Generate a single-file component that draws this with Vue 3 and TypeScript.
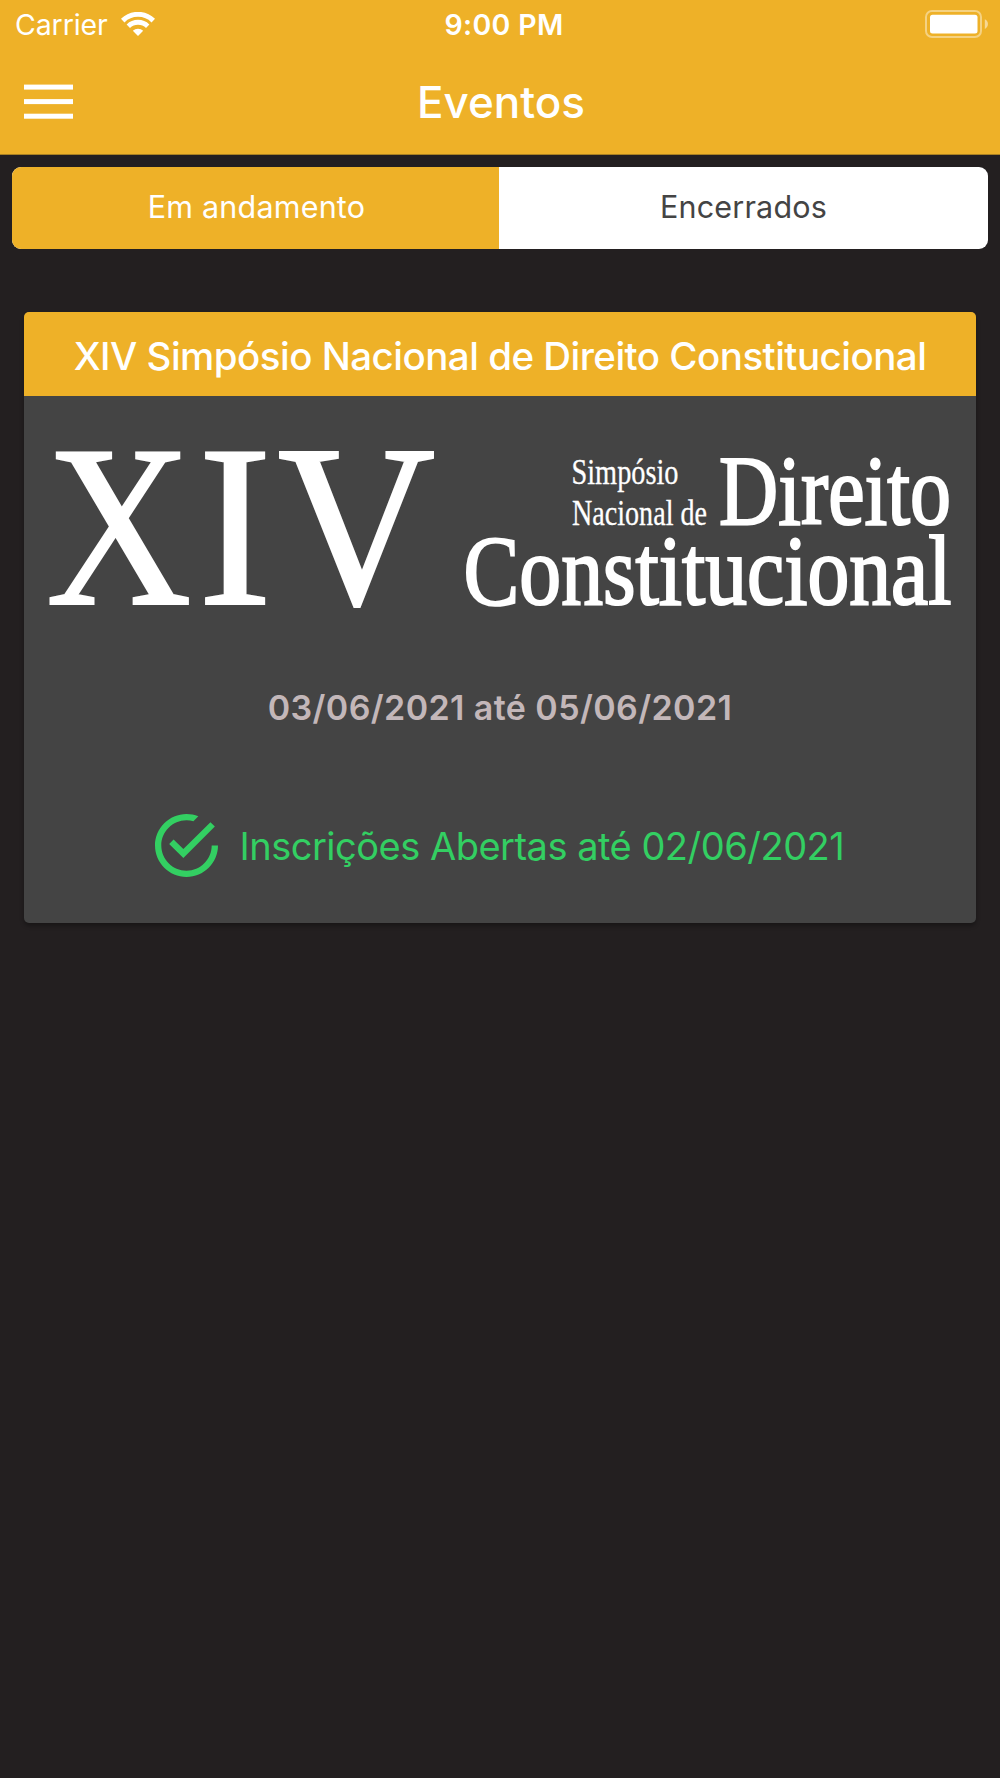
<script setup lang="ts">
import { ref } from 'vue'

interface Tab {
  id: string
  label: string
}

const tabs: Tab[] = [
  { id: 'ongoing', label: 'Em andamento' },
  { id: 'closed', label: 'Encerrados' },
]
const active = ref('ongoing')

const event = {
  title: 'XIV Simpósio Nacional de Direito Constitucional',
  period: '03/06/2021 até 05/06/2021',
  status: 'Inscrições Abertas até 02/06/2021',
}
</script>

<template>
  <div class="screen">
    <header class="top">
      <div class="status-bar">
        <div class="network">
          <span class="carrier">Carrier</span>
          <svg class="wifi" width="34" height="24" viewBox="0 0 34 24" fill="none" stroke="#fff">
            <path d="M1.7 8.6a21.8 21.8 0 0 1 30.6 0" stroke-width="5" />
            <path d="M7.3 14.2a13.9 13.9 0 0 1 19.4 0" stroke-width="4.8" />
            <path d="M17 24l-5.2-5.2a7.6 7.6 0 0 1 10.4 0z" fill="#fff" stroke="none" />
          </svg>
        </div>
        <span class="clock">9:00 PM</span>
        <svg class="battery" width="64" height="28" viewBox="0 0 64 28">
          <rect x="1" y="1" width="55" height="26" rx="6" fill="none" stroke="#fff" stroke-opacity=".42" stroke-width="2" />
          <rect x="5" y="4.8" width="47.5" height="18.6" rx="2.5" fill="#fff" />
          <path d="M59.8 9.3c4.2 1.8 4.2 7.8 0 9.6z" fill="#fff" fill-opacity=".5" />
        </svg>
      </div>
      <nav class="nav">
        <button class="menu" aria-label="Menu">
          <svg width="49" height="36" viewBox="0 0 49 36" fill="#fff">
            <rect y="0.6" width="49" height="5" />
            <rect y="15.1" width="49" height="5" />
            <rect y="29.7" width="49" height="5" />
          </svg>
        </button>
        <h1>Eventos</h1>
      </nav>
    </header>

    <main>
      <div class="segment">
        <button
          v-for="tab in tabs"
          :key="tab.id"
          :class="['tab', tab.id, { active: active === tab.id }]"
          @click="active = tab.id"
        >
          <span>{{ tab.label }}</span>
        </button>
      </div>

      <article class="card">
        <h2><span>{{ event.title }}</span></h2>
        <svg class="logo" width="952" height="244" viewBox="24 396 952 244" fill="#fff">
          <g font-size="230" stroke="#fff" stroke-width="2">
            <text x="46" y="604" textLength="145.6" lengthAdjust="spacingAndGlyphs">X</text>
            <text x="198" y="604" textLength="74" lengthAdjust="spacingAndGlyphs">I</text>
            <text x="277.5" y="604" textLength="158" lengthAdjust="spacingAndGlyphs">V</text>
          </g>
          <g font-size="36" stroke="#fff" stroke-width="0.3">
            <text x="571.5" y="483.6" textLength="107" lengthAdjust="spacingAndGlyphs">Simpósio</text>
            <text x="572" y="525" textLength="135" lengthAdjust="spacingAndGlyphs">Nacional de</text>
          </g>
          <g font-size="99" stroke="#fff" stroke-width="2.2">
            <text x="719" y="524" textLength="232" lengthAdjust="spacingAndGlyphs">Direito</text>
            <text x="463.5" y="604" textLength="488" lengthAdjust="spacingAndGlyphs">Constitucional</text>
          </g>
        </svg>
        <p class="period"><span>{{ event.period }}</span></p>
        <p class="status">
          <svg width="63" height="63" viewBox="48 48 416 416" fill="#33cf62">
            <path d="M170.718 216.482L141.6 245.6l93.6 93.6 208-208-29.118-29.118L235.2 279.918z" />
            <path d="M422.4 256c0 91.518-74.883 166.4-166.4 166.4S89.6 347.518 89.6 256 164.482 89.6 256 89.6c15.6 0 31.2 2.082 45.764 6.241L334 62.4C310.082 53.041 283.036 48 256 48 141.6 48 48 141.6 48 256s93.6 208 208 208 208-93.6 208-208z" />
          </svg>
          <span>{{ event.status }}</span>
        </p>
      </article>
    </main>
  </div>
</template>

<style>
body {
  background: #231f20;
}
</style>

<style scoped>
.screen {
  box-sizing: border-box;
  width: 1000px;
  height: 1778px;
  overflow: hidden;
  background: #231f20;
  color: #fff;
  font-family: Inter, 'Liberation Sans', sans-serif;
  white-space: nowrap;
}
button {
  padding: 0;
  border: 0;
  background: none;
  color: inherit;
  font: inherit;
}
h1,
h2,
p {
  margin: 0;
}
.top {
  height: 154px;
  background: #eeb128;
  border-bottom: 1px solid #a98022;
}
.status-bar {
  display: grid;
  grid-template-columns: 1fr auto 1fr;
  align-items: start;
  height: 50px;
  padding: 0 11px 0 15px;
  box-sizing: border-box;
}
.network {
  display: flex;
  gap: 14px;
}
.carrier {
  width: 92px;
  font-size: 28.5px;
  letter-spacing: -0.1px;
  line-height: 50px;
}
.wifi {
  margin-top: 12px;
}
.clock {
  padding-left: 4px;
  font-size: 28.5px;
  font-weight: 600;
  letter-spacing: 0.35px;
  line-height: 50px;
}
.battery {
  justify-self: end;
  margin-top: 10px;
}
.nav {
  display: grid;
  grid-template-columns: 49px 1fr 49px;
  align-items: start;
  height: 104px;
  padding: 0 24px;
}
.menu {
  height: 36px;
  margin-top: 34px;
}
.menu svg {
  display: block;
}
h1 {
  padding-left: 2px;
  font-size: 44px;
  font-weight: 500;
  line-height: 105px;
  text-align: center;
}
.segment {
  display: flex;
  height: 82px;
  margin: 12px 12px 0;
  border-radius: 9px;
  overflow: hidden;
  background: #fff;
}
.tab {
  flex: 1;
  color: #444;
  font-size: 30.5px;
  letter-spacing: 0.2px;
  line-height: 79px;
}
.tab span {
  display: block;
  height: 82px;
}
.tab.ongoing {
  flex: 0 0 487px;
}
.tab.ongoing span {
  padding-left: 2px;
}
.tab.active {
  background: #eeb128;
  color: #fff;
}
.card {
  display: flex;
  flex-direction: column;
  height: 611px;
  margin: 63px 24px 0;
  border-radius: 5px;
  overflow: hidden;
  background: #444;
  box-shadow: 0 3px 4px rgba(0, 0, 0, 0.3);
}
h2 {
  height: 84px;
  background: #eeb128;
  font-size: 38.5px;
  font-weight: 500;
  letter-spacing: -0.52px;
  line-height: 88px;
  text-align: center;
}
.logo {
  flex: none;
  overflow: visible;
  font-family: 'Liberation Serif', serif;
}
.period {
  margin-top: 38px;
  color: #c3b7b9;
  font-size: 34px;
  font-weight: 600;
  letter-spacing: 0.4px;
  line-height: 60px;
  text-align: center;
}
.status {
  display: flex;
  align-items: center;
  margin: 75px 0 0 130.5px;
  color: #33cf62;
  font-size: 38px;
  letter-spacing: -0.5px;
  line-height: 63px;
}
.status span {
  margin: 2px 0 0 22px;
}
</style>
